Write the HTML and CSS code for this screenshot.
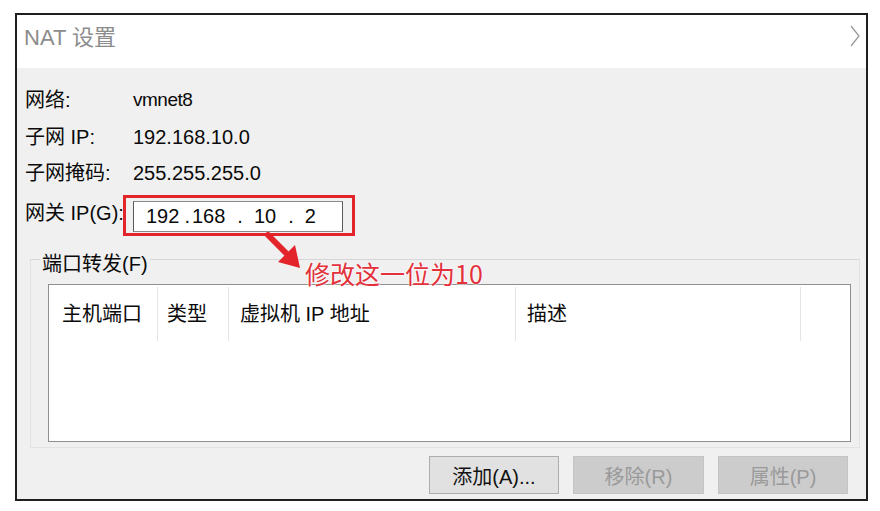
FILE: index.html
```html
<!DOCTYPE html>
<html lang="zh-CN">
<head>
<meta charset="utf-8">
<title>NAT 设置</title>
<link rel="stylesheet" href="styles.css">
</head>
<body>
<div class="frame">
  <div class="titlebar">
    <span class="title">NAT 设置</span>
    <svg class="chevron" width="10" height="22" viewBox="0 0 10 22"><polyline points="1,1 9,11 1,21" fill="none" stroke="#9a9a9a" stroke-width="1.3"/></svg>
  </div>
  <div class="body">
    <div class="row r1"><span class="label">网络:</span><span class="value">vmnet8</span></div>
    <div class="row r2"><span class="label">子网 IP:</span><span class="value">192.168.10.0</span></div>
    <div class="row r3"><span class="label">子网掩码:</span><span class="value">255.255.255.0</span></div>
    <div class="row gw">
      <span class="label">网关 IP(G):</span>
      <div class="ipbox">
        <span class="seg s1">192</span><span class="dot d1">.</span><span class="seg s2">168</span><span class="dot d2">.</span><span class="seg s3">10</span><span class="dot d3">.</span><span class="seg s4">2</span>
      </div>
    </div>
    <fieldset class="group">
      <legend>端口转发(F)</legend>
      <div class="listview">
        <div class="lv-head">
          <div class="col c1">主机端口</div>
          <div class="col c2">类型</div>
          <div class="col c3">虚拟机 IP 地址</div>
          <div class="col c4">描述</div>
          <div class="col c5"></div>
        </div>
      </div>
    </fieldset>
    <div class="buttons">
      <button class="btn">添加(A)...</button>
      <button class="btn disabled">移除(R)</button>
      <button class="btn disabled">属性(P)</button>
    </div>
  </div>
</div>

<div class="annot-box"></div>
<svg class="annot-arrow" width="880" height="511" viewBox="0 0 880 511">
  <line x1="268" y1="235" x2="289" y2="256" stroke="#e3242b" stroke-width="6" stroke-linecap="round"/>
  <polygon points="300,268 278,262 295,245" fill="#e3242b"/>
</svg>
<div class="annot-text">修改这一位为10</div>
</body>
</html>
```
FILE: styles.css
```css
html, body {
  margin: 0;
  padding: 0;
  background: #ffffff;
}
body {
  width: 880px;
  height: 511px;
  overflow: hidden;
  position: relative;
  font-family: "Liberation Sans", "Noto Sans CJK SC", sans-serif;
  font-size: 20px;
  color: #0a0a0a;
}
.frame {
  margin: 13px 0 0 15px;
  width: 853px;
  height: 488px;
  box-sizing: border-box;
  border: 2px solid #1f1f1f;
  display: flex;
  flex-direction: column;
}
.titlebar {
  height: 53px;
  box-sizing: border-box;
  padding: 10px 6px 0 7px;
  background: #ffffff;
  display: flex;
  justify-content: space-between;
  align-items: flex-start;
}
.title {
  color: #8c8c8c;
  font-size: 22px;
  line-height: 26px;
}
.chevron {
  display: block;
}
.body {
  flex: 1;
  background: #f0f0f0;
  padding: 14px 6px 0 8px;
  display: flex;
  flex-direction: column;
}
.row {
  display: flex;
  align-items: center;
  line-height: 36px;
}
.r1 { height: 36px; }
.r2 { height: 37px; }
.r3 { height: 36px; }
.label {
  width: 108px;
  flex: none;
  white-space: nowrap;
}
.value {
  white-space: nowrap;
}
.r1 .value {
  font-size: 19px;
  letter-spacing: -0.5px;
}
.gw {
  height: 31px;
  margin-top: 10px;
  line-height: 31px;
}
.gw .label {
  padding-bottom: 6px;
}
.ipbox {
  width: 210px;
  height: 31px;
  box-sizing: border-box;
  background: #ffffff;
  border: 1px solid #8a8a8a;
  border-left-color: #5a5a5a;
  border-right-color: #5a5a5a;
  display: flex;
  align-items: center;
  line-height: 29px;
  white-space: nowrap;
}
.s1 { margin-left: 12px; }
.d1 { margin-left: 5px; }
.s2 { margin-left: 2px; }
.d2 { margin-left: 12px; }
.s3 { margin-left: 11px; }
.d3 { margin-left: 12px; }
.s4 { margin-left: 11px; }

.group {
  margin: 11px 0 0 5px;
  padding: 9px 8px 5px 9px;
  border: 1px solid #e2e2e2;
  border-top-color: #d6d6d6;
  min-width: 0;
}
.group legend {
  padding: 10px 2px 0 2px;
  line-height: 22px;
  font-size: 20px;
}
.listview {
  margin-left: 8px;
  height: 158px;
  box-sizing: border-box;
  background: #ffffff;
  border: 1px solid #8f8f8f;
}
.lv-head {
  display: grid;
  grid-template-columns: 109px 71px 287px 285px 1fr;
  height: 54px;
}
.col {
  box-sizing: border-box;
  border-right: 1px solid #e4e4e4;
  white-space: nowrap;
  margin-top: 2px;
  line-height: 54px;
}
.c1 { padding-left: 13px; }
.c2 { padding-left: 9px; }
.c3 { padding-left: 11px; }
.c4 { padding-left: 11px; }
.c5 { border-right: none; }

.buttons {
  display: flex;
  justify-content: flex-end;
  gap: 14px;
  margin: 8px 12px 0 0;
}
.btn {
  width: 130px;
  height: 38px;
  box-sizing: border-box;
  background: #e1e1e1;
  border: 1px solid #adadad;
  font-family: "Liberation Sans", "Noto Sans CJK SC", sans-serif;
  font-size: 20px;
  color: #111;
  padding: 0;
}
.btn.disabled {
  background: #cccccc;
  border-color: #c4c4c4;
  color: #9a9a9a;
}
.buttons .btn:nth-child(2) { width: 131px; }

.annot-box {
  position: absolute;
  left: 123px;
  top: 195px;
  width: 232px;
  height: 41px;
  box-sizing: border-box;
  border: 3px solid #e3242b;
}
.annot-arrow {
  position: absolute;
  left: 0;
  top: 0;
}
.annot-text {
  position: absolute;
  left: 305px;
  top: 259px;
  font-family: "Noto Sans CJK SC", "Liberation Sans", sans-serif;
  font-size: 25px;
  line-height: 28px;
  color: #e3303a;
  white-space: nowrap;
  text-shadow: 0 0 2px #ffffff, 0 0 2px #ffffff;
}
```
